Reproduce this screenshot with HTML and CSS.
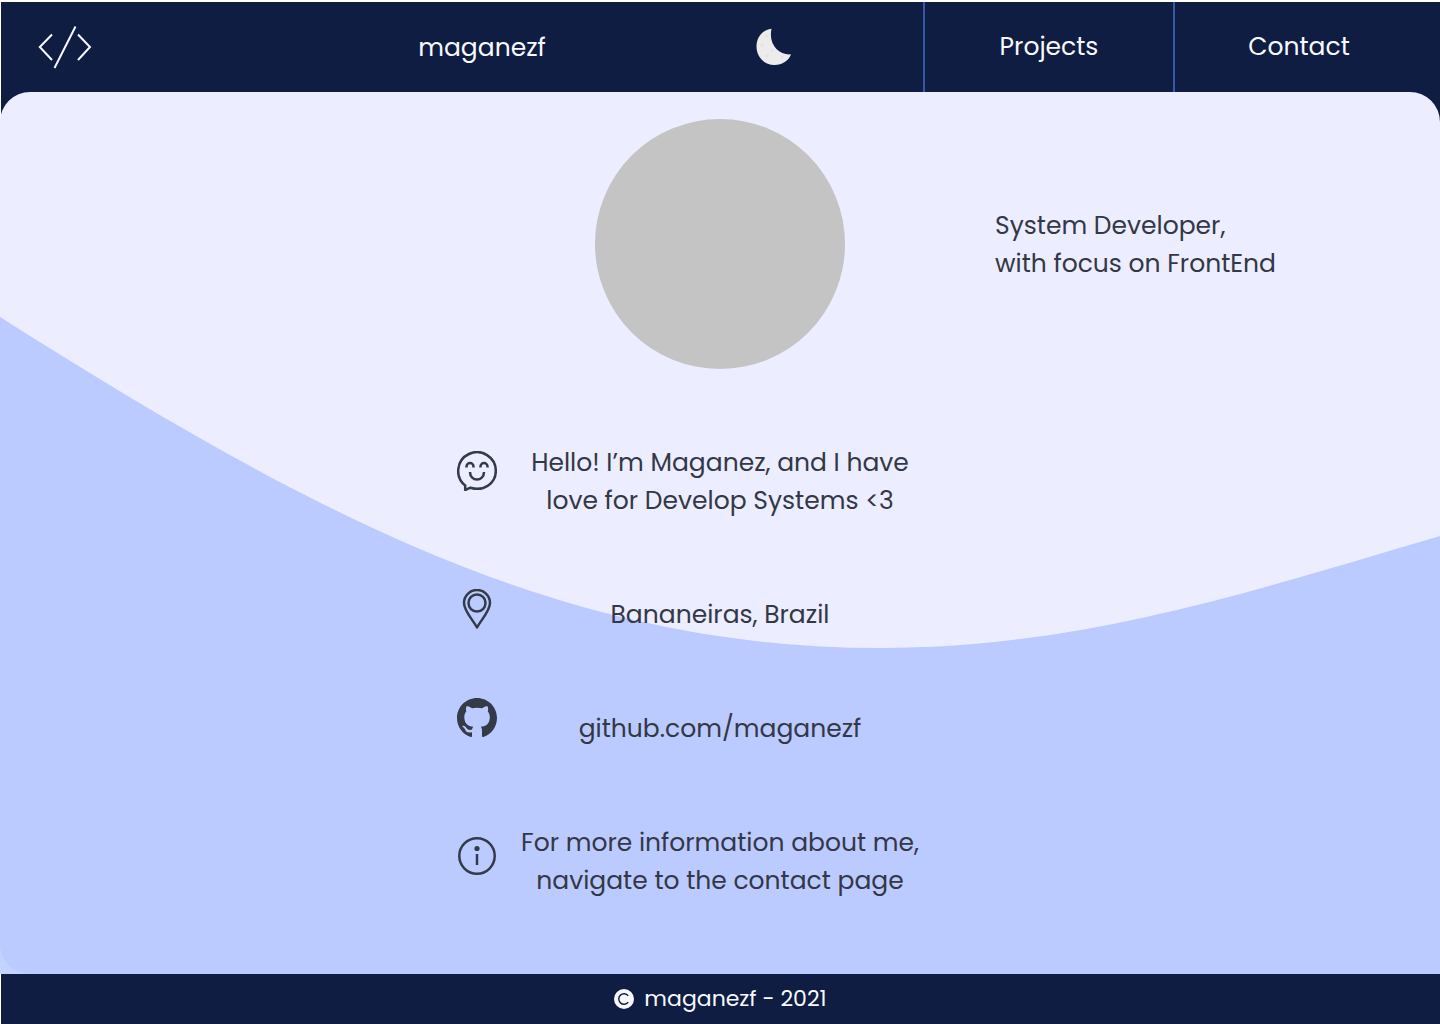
FILE: index.html
```html
<!DOCTYPE html>
<html lang="en">
<head>
<meta charset="utf-8">
<title>maganezf</title>
<link rel="stylesheet" href="styles.css">
</head>
<body>
<div class="page">
  <header class="header">
    <div class="brand">
      <svg class="code" viewBox="0 0 54 44" width="54" height="44"><path d="M14 9.500 1.800 22 14 35M40 9.500 52 22 40 35M37.500 1.500 16.500 43"/></svg>
    </div>
    <div class="name">maganezf</div>
    <div class="theme">
      <svg width="36" height="38" viewBox="0 0 36 38"><path fill="#ececec" d="M15.500.800C6.500 1.800.500 9 .500 18.500.500 29 8.500 37 18.500 37c8 0 14-4 16.500-10.700C23.500 27.500 12 17 15.500.800Z"/><g fill="#dfe5e5"><circle cx="11" cy="8" r="1.600"/><circle cx="6" cy="17" r="1.600"/><circle cx="16" cy="22.500" r="1.600"/><circle cx="11" cy="28" r="1.600"/><circle cx="26" cy="29" r="1.500"/></g></svg>
    </div>
    <nav class="nav"><a class="link">Projects</a><a class="link">Contact</a></nav>
  </header>
  <main class="main">
    <svg class="wave" viewBox="0 0 1440 882"><path class="wave-corner" d="M0 840H40V882H0Z"/><path d="M0 225C325 431 570 556 881 556 1080 556 1250 500 1440 444V882H30A30 30 0 0 1 0 852Z"/></svg>
    <div class="hero">
      <div class="avatar"></div>
      <p class="role">System Developer,<br>with focus on FrontEnd</p>
    </div>
    <section class="about">
      <div class="row hello">
        <svg class="icon" viewBox="0 0 40 40"><path class="line" d="M8.200 34.200V39l5.300-2.300C27 41 38.800 32 38.800 20A18.800 18.800 0 1 0 8.200 34.600Z"/><path class="line" d="M9.500 16.500v-1a3.500 3.500 0 0 1 7 0v1M23.500 16.500v-1a3.500 3.500 0 0 1 7 0v1M13 21c0 10 14 10 14 0"/></svg>
        <p>Hello! I’m Maganez, and I have<br>love for Develop Systems &lt;3</p>
      </div>
      <div class="row place">
        <svg class="icon" viewBox="0 0 40 40"><path class="line" d="M20 38.500C16 31 7 22 7 14a13 13 0 0 1 26 0c0 8-9 17-13 24.500Z"/><circle class="line" cx="20" cy="14" r="8.500"/></svg>
        <p>Bananeiras, Brazil</p>
      </div>
      <div class="row github">
        <svg class="icon" viewBox="0 0 16 16"><path d="M8 0C3.580 0 0 3.580 0 8c0 3.540 2.290 6.530 5.470 7.590.4.070.55-.17.55-.38 0-.19-.01-.82-.01-1.490-2.010.37-2.530-.49-2.690-.94-.09-.23-.48-.94-.82-1.130-.28-.15-.68-.52-.01-.53.63-.01 1.080.58 1.230.82.72 1.210 1.870.87 2.330.66.07-.52.28-.87.51-1.070-1.780-.2-3.640-.89-3.640-3.950 0-.87.31-1.590.82-2.150-.08-.2-.36-1.020.08-2.120 0 0 .67-.21 2.200.82a7.600 7.600 0 0 1 4 0c1.530-1.040 2.200-.82 2.200-.82.44 1.100.16 1.920.08 2.120.51.56.82 1.270.82 2.150 0 3.070-1.870 3.750-3.650 3.950.29.25.54.73.54 1.480 0 1.070-.01 1.930-.01 2.200 0 .21.15.46.55.38A8 8 0 0 0 16 8c0-4.420-3.580-8-8-8Z"/></svg>
        <p>github.com/maganezf</p>
      </div>
      <div class="row info">
        <svg class="icon" viewBox="0 0 40 40"><circle class="line" cx="20" cy="20" r="17.700"/><circle cx="20" cy="12.500" r="2.600"/><path class="line" d="M20 18v11"/></svg>
        <p>For more information about me,<br>navigate to the contact page</p>
      </div>
    </section>
  </main>
  <footer class="footer">
    <svg width="20" height="20" viewBox="0 0 20 20"><circle cx="10" cy="10" r="10" fill="#f8f8ff"/><path d="M14.200 6.700a5.300 5.300 0 1 0 0 6.600" fill="none" stroke="#0f1d42" stroke-width="1.400"/></svg>
    <span>maganezf - 2021</span>
  </footer>
</div>
</body>
</html>
```
FILE: styles.css
```css
* { box-sizing: border-box; }
body {
  margin: 0;
  background: #fff;
  font: 25px/38px Poppins, Inter, sans-serif;
  color: #333846;
}
p { margin: 0; white-space: nowrap; }
.page { height: 1024px; display: flex; flex-direction: column; padding-top: 2px; overflow: hidden; }
.header { height: 90px; margin-left: 1px; display: flex; background: #0f1d42; color: #f8f8ff; flex: none; box-shadow: 0 30px #0f1d42; }
.brand { width: 356px; padding: 23px 0 0 37px; }
.code { fill: none; stroke: #f8f8ff; stroke-width: 2; }
.name { width: 250px; display: flex; justify-content: center; padding-top: 27px; }
.theme { flex: 1; padding: 26px 0 0 149px; }
.nav { display: flex; width: 517px; }
.link { width: 250px; border-left: 2px solid #3757a8; display: flex; justify-content: center; padding-top: 26px; }
.main { position: relative; height: 882px; flex: none; background: #ecedff; border-radius: 30px 30px 0 0; overflow: hidden; }
.wave { position: absolute; inset: 0; width: 1440px; height: 882px; fill: #bbcaff; }
.wave-corner { fill: #c4d2ff; }
.hero, .about { position: relative; }
.hero { display: flex; padding: 27px 0 0 595px; }
.avatar { width: 250px; height: 250px; border-radius: 50%; background: #c4c4c4; }
.role { margin: 88px 0 0 150px; }
.about { padding: 75px 0 0 457px; display: flex; flex-direction: column; }
.row { display: flex; align-items: flex-start; }
.row p { width: 446px; text-align: center; }
.icon { width: 40px; height: 40px; fill: #333a48; flex: none; }
.hello .icon { margin-top: 7px; }
.place { margin-top: 69px; }
.place p { margin-top: 7px; }
.github { margin-top: 64px; }
.github p { margin-top: 12px; }
.info { margin-top: 76px; }
.info .icon { margin-top: 12px; }
.line { fill: none; stroke: #333a48; stroke-width: 2.500; stroke-linejoin: round; stroke-linecap: butt; }
.footer { height: 50px; margin-left: 1px; background: #0f1d42; color: #f8f8ff; display: flex; justify-content: center; align-items: center; gap: 10px; font-size: 22px; }
```
